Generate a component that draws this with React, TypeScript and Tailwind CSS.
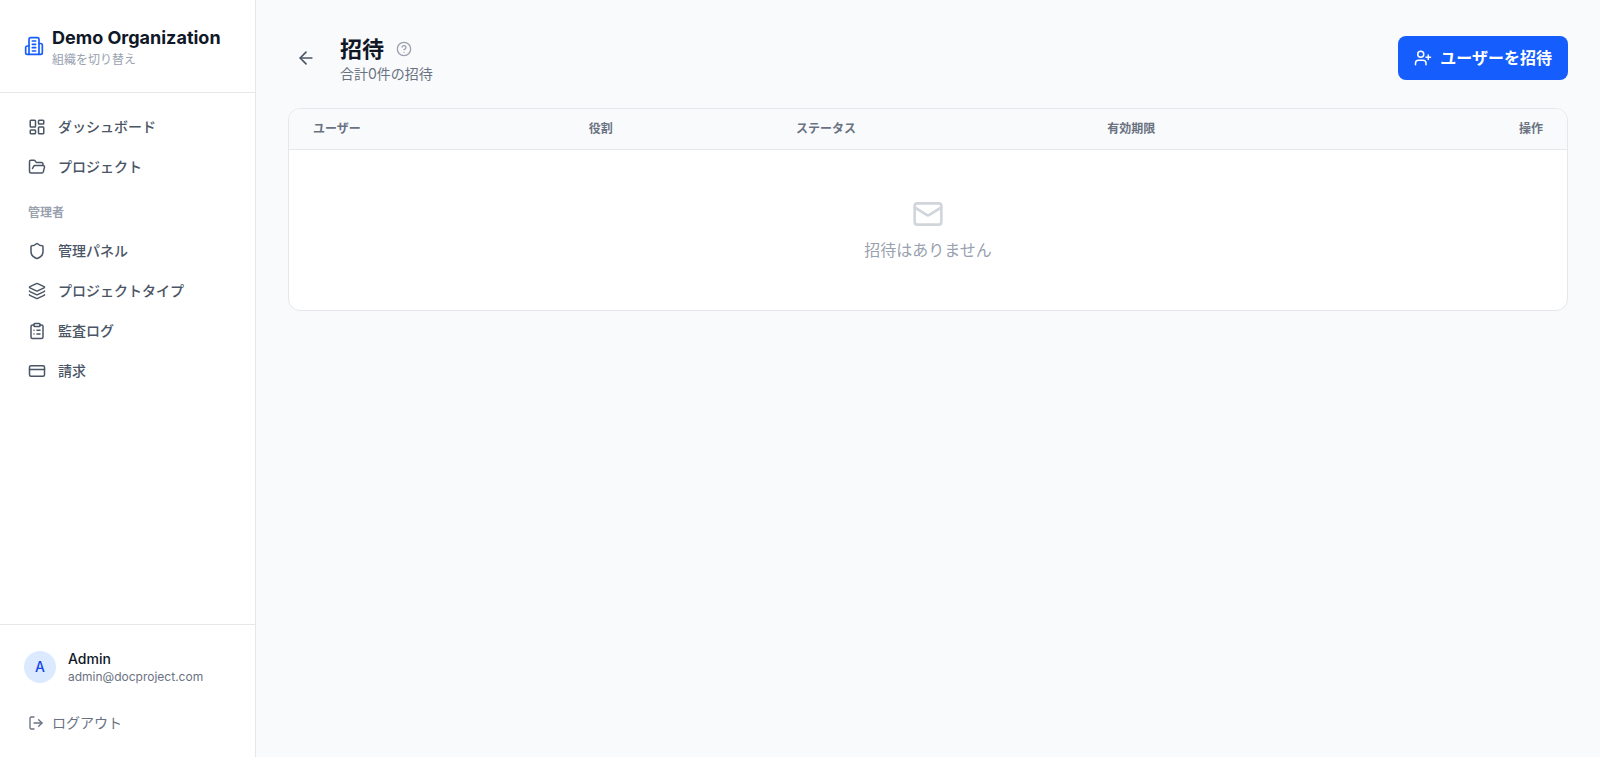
import {
  ArrowLeft,
  ClipboardList,
  CreditCard,
  FolderOpen,
  HelpCircle,
  Layers,
  LayoutDashboard,
  LogOut,
  Mail,
  Shield,
  UserPlus,
  type LucideIcon,
} from 'lucide-react';

interface NavItem {
  label: string;
  icon: LucideIcon;
}

const mainNav: NavItem[] = [
  { label: 'ダッシュボード', icon: LayoutDashboard },
  { label: 'プロジェクト', icon: FolderOpen },
];

const adminNav: NavItem[] = [
  { label: '管理パネル', icon: Shield },
  { label: 'プロジェクトタイプ', icon: Layers },
  { label: '監査ログ', icon: ClipboardList },
  { label: '請求', icon: CreditCard },
];

function BuildingIcon({ className }: { className?: string }) {
  return (
    <svg
      className={className}
      width={20}
      height={20}
      viewBox="0 0 24 24"
      fill="none"
      stroke="currentColor"
      strokeWidth={2}
      strokeLinecap="round"
      strokeLinejoin="round"
      aria-hidden="true"
    >
      <path d="M6 22V4a2 2 0 0 1 2-2h8a2 2 0 0 1 2 2v18Z" />
      <path d="M6 12H4a2 2 0 0 0-2 2v6a2 2 0 0 0 2 2h2" />
      <path d="M18 9h2a2 2 0 0 1 2 2v9a2 2 0 0 1-2 2h-2" />
      <path d="M10 6h4" />
      <path d="M10 10h4" />
      <path d="M10 14h4" />
      <path d="M10 18h4" />
    </svg>
  );
}

function NavLink({ label, icon: Icon }: NavItem) {
  return (
    <a
      href="#"
      className="flex items-center gap-3 px-3 py-2 rounded-lg text-sm font-medium text-gray-600 hover:bg-gray-50 hover:text-gray-900"
    >
      <Icon size={18} />
      {label}
    </a>
  );
}

function Sidebar() {
  return (
    <aside className="w-64 shrink-0 bg-white border-r border-gray-200 flex flex-col">
      <div className="p-6 border-b border-gray-200">
        <a href="#" className="flex items-center gap-2">
          <BuildingIcon className="text-blue-600 shrink-0" />
          <div className="min-w-0">
            <h1 className="text-lg font-bold text-gray-900 truncate">Demo Organization</h1>
            <p className="text-xs text-gray-400">組織を切り替え</p>
          </div>
        </a>
      </div>

      <nav className="flex-1 p-4 space-y-1">
        {mainNav.map((item) => (
          <NavLink key={item.label} {...item} />
        ))}
        <div className="pt-4 pb-2 px-3">
          <p className="text-xs font-bold text-gray-400">管理者</p>
        </div>
        {adminNav.map((item) => (
          <NavLink key={item.label} {...item} />
        ))}
      </nav>

      <div className="p-4 border-t border-gray-200">
        <div className="flex items-center gap-3 px-2 py-2 mb-3">
          <div className="w-8 h-8 rounded-full bg-blue-100 text-blue-700 flex items-center justify-center text-sm font-medium">
            A
          </div>
          <div className="min-w-0">
            <p className="text-sm font-medium text-gray-900 truncate">Admin</p>
            <p className="text-xs text-gray-500 truncate">admin@docproject.com</p>
          </div>
        </div>
        <button className="w-full flex items-center gap-2 px-3 py-2 rounded-lg text-sm text-gray-500 hover:bg-gray-50">
          <LogOut size={16} />
          ログアウト
        </button>
      </div>
    </aside>
  );
}

export default function App() {
  return (
    <div className="min-h-screen flex bg-gray-50 font-['Inter','Noto_Sans_CJK_JP',sans-serif]" lang="ja">
      <Sidebar />

      <main className="flex-1 min-w-0 p-8">
        <div className="flex items-center justify-between mb-6">
          <div className="flex items-center gap-4">
            <button className="p-2 rounded-lg text-gray-600 hover:bg-gray-100" aria-label="戻る">
              <ArrowLeft size={20} />
            </button>
            <div>
              <div className="flex items-center gap-3 pt-0.5">
                <h2 className="text-[22px] leading-[30px] font-bold text-gray-900">招待</h2>
                <button className="text-gray-400 hover:text-gray-600" aria-label="ヘルプ">
                  <HelpCircle size={16} />
                </button>
              </div>
              <p className="text-sm text-gray-500">合計0件の招待</p>
            </div>
          </div>
          <button className="flex items-center gap-2 px-4 py-2.5 rounded-lg bg-blue-600 text-white font-bold hover:bg-blue-700">
            <UserPlus size={18} />
            ユーザーを招待
          </button>
        </div>

        <div className="bg-white rounded-xl border border-gray-200 overflow-hidden">
          <table className="w-full">
            <thead>
              <tr className="bg-gray-50 border-b border-gray-200 text-xs text-gray-500">
                <th className="px-6 py-3 text-left font-bold">ユーザー</th>
                <th className="px-6 py-3 text-left font-bold">役割</th>
                <th className="px-6 py-3 text-left font-bold">ステータス</th>
                <th className="px-6 py-3 text-left font-bold">有効期限</th>
                <th className="px-6 py-3 text-right font-bold">操作</th>
              </tr>
            </thead>
            <tbody>
              <tr>
                <td colSpan={5} className="px-6 py-12 text-center text-gray-400">
                  <Mail size={32} className="mx-auto mb-2 text-gray-300" />
                  招待はありません
                </td>
              </tr>
            </tbody>
          </table>
        </div>
      </main>
    </div>
  );
}
